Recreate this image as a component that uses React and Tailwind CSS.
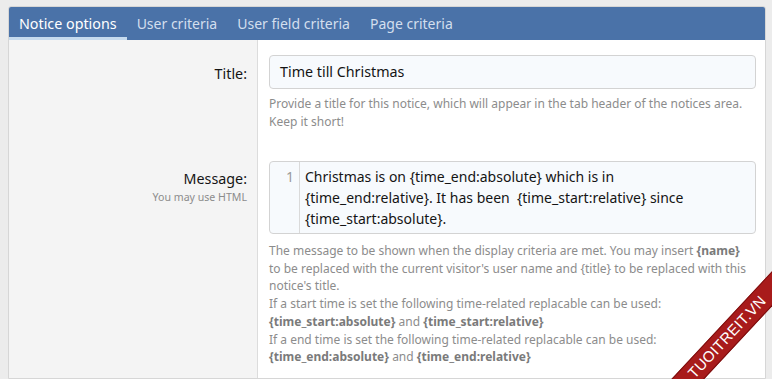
export default function App() {
  const tabs = ["Notice options", "User criteria", "User field criteria", "Page criteria"];

  return (
    <div
      className="h-screen overflow-hidden bg-[#ececec] pt-[6px] pl-[8px] pr-[6px] text-[#141414]"
      style={{ fontFamily: '"Noto Sans", "Open Sans", sans-serif' }}
    >
      <div className="h-full flex flex-col border border-[#d6d6d6] rounded-t-[3px] overflow-hidden">
        {/* tab header */}
        <div className="flex shrink-0 bg-[#4a72a8] h-[33px]">
          {tabs.map((t, i) => (
            <div
              key={t}
              className={
                i === 0
                  ? "px-[10px] flex items-center text-[14.3px] text-white border-b-[3px] border-[#c6dbef] pt-[3px]"
                  : "px-[10px] flex items-center text-[14px] text-[#d3dfee]"
              }
            >
              {t}
            </div>
          ))}
        </div>

        {/* Title row */}
        <div className="flex">
          <div className="w-[249px] shrink-0 bg-[#f4f4f4] border-r border-[#dcdcdc] pr-[10px] pt-[23px] text-right text-[14.3px]">
            Title:
          </div>
          <div className="flex-1 bg-white pt-[15px] pb-[30px] pl-[11px] pr-[9px]">
            <div className="h-[34px] border border-[#d3d3d3] rounded-[4px] bg-[#f7fafd] px-[10px] flex items-center text-[14.3px]">
              Time till Christmas
            </div>
            <p className="mt-[6px] text-[12px] leading-[18px] text-[#8c8c8c]">
              Provide a title for this notice, which will appear in the tab header of the notices area. Keep it
              short!
            </p>
          </div>
        </div>

        {/* Message row */}
        <div className="flex flex-1">
          <div className="w-[249px] shrink-0 bg-[#f4f4f4] border-r border-[#dcdcdc] pr-[10px] pt-[8px] text-right">
            <div className="text-[14.3px] leading-[20px]">Message:</div>
            <div className="text-[10.6px] leading-[16px] text-[#8c8c8c]">You may use HTML</div>
          </div>
          <div className="flex-1 bg-white pl-[11px] pr-[9px]">
            <div className="flex border border-[#d3d3d3] rounded-[4px] bg-[#f7fafd] text-[14px] leading-[21px]">
              <div className="w-[30px] shrink-0 border-r border-[#dadada] text-right pr-[5px] pt-[4px] text-[#9a9a9a]">
                1
              </div>
              <div className="flex-1 pl-[5px] pr-[10px] pt-[4px] pb-[4px]">
                Christmas is on {"{time_end:absolute}"} which is in {"{time_end:relative}"}. It has been&nbsp;{" "}
                {"{time_start:relative}"} since {"{time_start:absolute}"}.
              </div>
            </div>
            <div className="mt-[8px] text-[12px] leading-[17.7px] text-[#8c8c8c]">
              <p>
                The message to be shown when the display criteria are met. You may insert{" "}
                <b className="text-[#7a7a7a]">{"{name}"}</b>
                <br />
                to be replaced with the current visitor's user name and {"{title}"} to be replaced with this
                notice's title.
              </p>
              <p>If a start time is set the following time-related replacable can be used:</p>
              <p>
                <b className="text-[#7a7a7a]">{"{time_start:absolute}"}</b> and{" "}
                <b className="text-[#7a7a7a]">{"{time_start:relative}"}</b>
              </p>
              <p>If a end time is set the following time-related replacable can be used:</p>
              <p>
                <b className="text-[#7a7a7a]">{"{time_end:absolute}"}</b> and{" "}
                <b className="text-[#7a7a7a]">{"{time_end:relative}"}</b>
              </p>
            </div>
          </div>
        </div>
      </div>
      <Ribbon />
    </div>
  );
}

function Ribbon() {
  return (
    <div className="fixed right-0 bottom-0 w-[160px] h-[160px] overflow-hidden pointer-events-none">
      <div
        className="absolute left-[-5px] top-[106px] w-[240px] h-[24px] bg-[#a81b1b] border-y border-[#7a0e0e] text-white text-[15px] leading-[22px] text-center -rotate-[47deg] tracking-[0.3px]"
        style={{ fontFamily: '"Liberation Sans", sans-serif' }}
      >
        TUOITREIT.VN
      </div>
    </div>
  );
}
